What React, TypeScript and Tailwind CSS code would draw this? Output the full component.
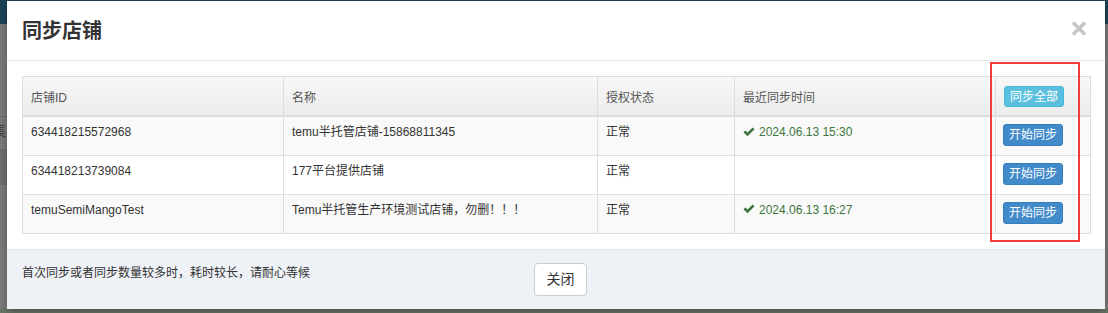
import React from "react";

type Shop = {
  id: string;
  name: string;
  status: string;
  syncedAt?: string;
};

const shops: Shop[] = [
  { id: "634418215572968", name: "temu半托管店铺-15868811345", status: "正常", syncedAt: "2024.06.13 15:30" },
  { id: "634418213739084", name: "177平台提供店铺", status: "正常" },
  { id: "temuSemiMangoTest", name: "Temu半托管生产环境测试店铺，勿删！！！", status: "正常", syncedAt: "2024.06.13 16:27" },
];

function CheckIcon() {
  return (
    <svg width="12" height="10" viewBox="0 0 12 10" className="inline-block mr-[4px] -mt-[2px]">
      <path d="M0.5 5.2 L2.3 3.4 L4.5 5.6 L9.7 0.4 L11.5 2.2 L4.5 9.2 Z" fill="#3c763d" />
    </svg>
  );
}

export default function App() {
  return (
    <div className="relative w-[1108px] h-[313px] overflow-hidden bg-[#7b7b7b] font-['Liberation_Sans','Noto_Sans_CJK_SC',sans-serif] text-[12px] text-[#333]">
      {/* dimmed page behind the dialog */}
      <div className="absolute inset-x-0 top-0 h-[24px] bg-[#1c4457]" />
      <div className="absolute left-0 top-[116px] w-[7px] h-px bg-[#6a6a6a]" />
      <div className="absolute left-0 top-[149px] w-[7px] h-[36px] bg-[#6e6e6e]" />
      <div className="absolute left-[-8px] top-[124px] text-[14px] leading-none text-[#3a3a3a]">集</div>
      <div className="absolute inset-x-0 bottom-0 h-[4px] bg-[#6a7467]" />

      {/* Dialog */}
      <div className="absolute left-[7px] top-[1px] w-[1098px] h-[308px] bg-white flex flex-col shadow-[0_3px_9px_rgba(0,0,0,0.3)]">
        {/* Header */}
        <div className="h-[60px] shrink-0 border-b border-[#e5e5e5] px-[15px] flex items-center justify-between">
          <h4 className="text-[20px] font-bold text-[#333] leading-none">同步店铺</h4>
          <button className="mr-[3px] -mt-[4px]" aria-label="close">
            <svg width="16" height="15" viewBox="0 0 16 15">
              <path d="M2 1.5 L14 13.5 M14 1.5 L2 13.5" stroke="#c6c6c6" strokeWidth="3.6" strokeLinecap="butt" />
            </svg>
          </button>
        </div>

        {/* Body */}
        <div className="relative p-[15px]">
          <table className="w-[1068px] table-fixed border-collapse border border-[#ddd]">
            <colgroup>
              <col className="w-[261px]" />
              <col className="w-[314px]" />
              <col className="w-[137px]" />
              <col className="w-[261px]" />
              <col className="w-[95px]" />
            </colgroup>
            <thead>
              <tr className="bg-gradient-to-b from-[#f8f8f8] to-[#ebebeb]">
                <th className="h-[38px] px-[8px] pb-[8px] align-bottom text-left font-normal text-[#555] leading-[17px] border border-[#ddd] border-b-2">店铺ID</th>
                <th className="px-[8px] pb-[8px] align-bottom text-left font-normal text-[#555] leading-[17px] border border-[#ddd] border-b-2">名称</th>
                <th className="px-[8px] pb-[8px] align-bottom text-left font-normal text-[#555] leading-[17px] border border-[#ddd] border-b-2">授权状态</th>
                <th className="px-[8px] pb-[8px] align-bottom text-left font-normal text-[#555] leading-[17px] border border-[#ddd] border-b-2">最近同步时间</th>
                <th className="px-[8px] pt-[9px] pb-[8px] align-bottom text-left font-normal border border-[#ddd] border-b-2">
                  <button className="block h-[21px] px-[5px] rounded-[3px] bg-[#5bc0de] border border-[#46b8da] text-white text-[12px] leading-[18px]">同步全部</button>
                </th>
              </tr>
            </thead>
            <tbody>
              {shops.map((s, i) => (
                <tr key={s.id} className={i % 2 === 0 ? "bg-[#f9f9f9]" : "bg-white"}>
                  <td className="h-[39px] px-[8px] pt-[7px] align-top leading-[17px] border border-[#ddd]">{s.id}</td>
                  <td className="px-[8px] pt-[7px] align-top leading-[17px] border border-[#ddd]">{s.name}</td>
                  <td className="px-[8px] pt-[7px] align-top leading-[17px] border border-[#ddd]">{s.status}</td>
                  <td className="px-[8px] pt-[7px] align-top leading-[17px] border border-[#ddd] text-[#3c763d]">
                    {s.syncedAt && (
                      <>
                        <CheckIcon />
                        {s.syncedAt}
                      </>
                    )}
                  </td>
                  <td className="px-[7px] pt-[7px] pb-[8px] align-top border border-[#ddd]">
                    <button className="block h-[22px] px-[5px] rounded-[3px] bg-[#428bca] border border-[#357ebd] text-white text-[12px] leading-[18px]">开始同步</button>
                  </td>
                </tr>
              ))}
            </tbody>
          </table>

          {/* highlight box */}
          <div className="absolute left-[983px] top-[1px] w-[90px] h-[180px] border-2 border-[#f03c3c]" />
        </div>

        {/* Footer */}
        <div className="flex-1 border-t border-[#e5e5e5] bg-[#eef1f6] px-[15px] flex items-start">
          <p className="w-[512px] mt-[15px] leading-[17px] text-[#333]">首次同步或者同步数量较多时，耗时较长，请耐心等候</p>
          <button className="mt-[13px] w-[53px] h-[33px] rounded-[4px] border border-[#ccc] bg-white text-[14px] text-[#333]">关闭</button>
        </div>
      </div>
    </div>
  );
}
